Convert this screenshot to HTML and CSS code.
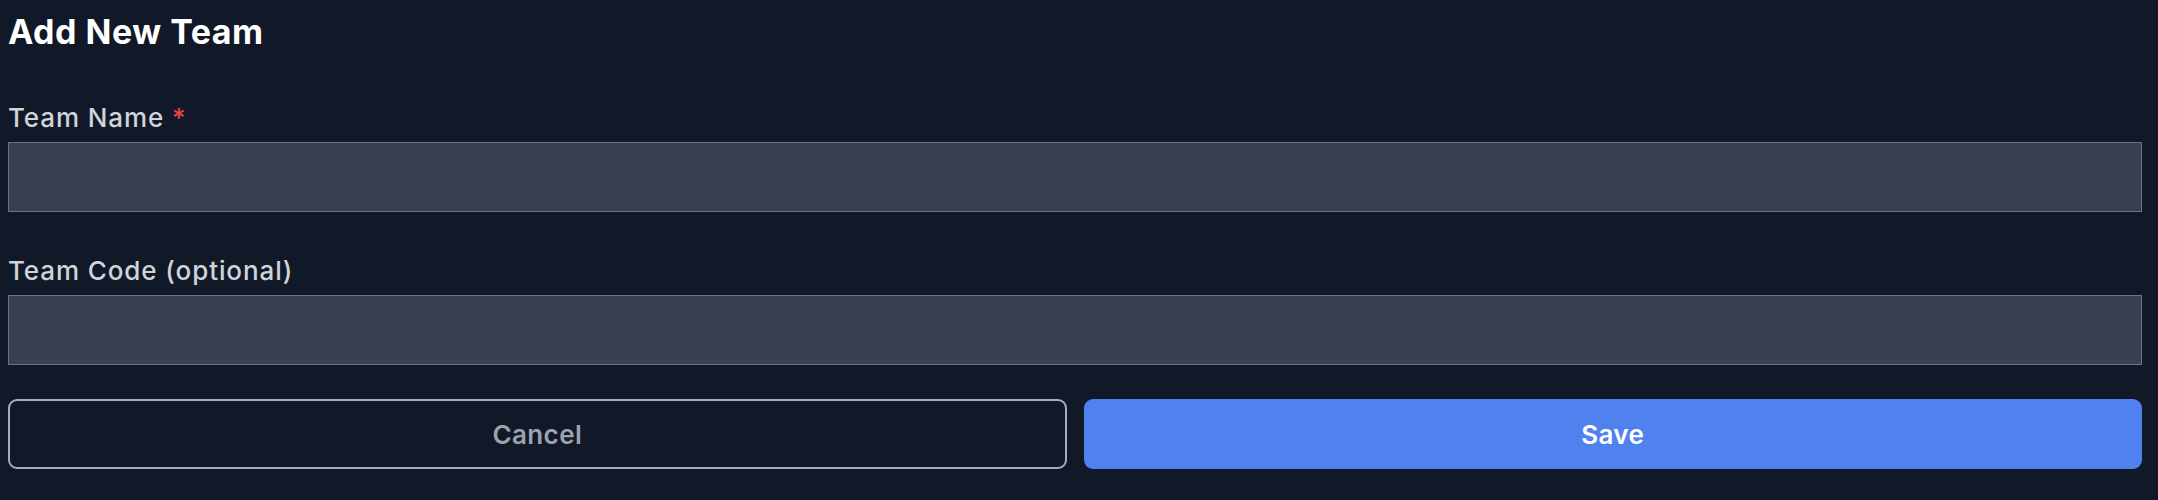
FILE: index.html
```html
<!DOCTYPE html>
<html lang="en">
<head>
<meta charset="utf-8">
<title>Add New Team</title>
<link rel="stylesheet" href="styles.css">
</head>
<body>
<form class="team-form">
  <h1 class="title">Add New Team</h1>
  <div class="fields">
    <div class="field">
      <label class="label" for="team-name">Team Name <span class="req">*</span></label>
      <input class="input" id="team-name" type="text">
    </div>
    <div class="field">
      <label class="label" for="team-code">Team Code (optional)</label>
      <input class="input" id="team-code" type="text">
    </div>
  </div>
  <div class="actions">
    <button type="button" class="btn btn-cancel">Cancel</button>
    <button type="button" class="btn btn-save">Save</button>
  </div>
</form>
</body>
</html>
```
FILE: styles.css
```css
html, body {
  margin: 0;
  padding: 0;
  background: #111827;
}
body {
  font-family: Inter, "Noto Sans", "Liberation Sans", sans-serif;
}
.team-form {
  padding: 12px 16px 0 8px;
  display: flex;
  flex-direction: column;
}
.title {
  margin: 0;
  font-size: 34px;
  line-height: 40px;
  font-weight: 700;
  color: #ffffff;
  letter-spacing: 0.5px;
}
.fields {
  margin-top: 48px;
  display: flex;
  flex-direction: column;
  gap: 41px;
}
.field {
  display: flex;
  flex-direction: column;
  gap: 6px;
}
.label {
  font-size: 26px;
  line-height: 36px;
  font-weight: 500;
  color: #cfd3da;
  letter-spacing: 0.9px;
}
.req {
  color: #ef4444;
}
.input {
  box-sizing: border-box;
  height: 70px;
  width: 100%;
  margin: 0;
  background: #394151;
  border: 1.5px solid #6b7280;
  border-radius: 0;
  outline: none;
  color: #fff;
  font: inherit;
}
.actions {
  margin-top: 34px;
  display: grid;
  grid-template-columns: 1fr 1fr;
  gap: 17px;
}
.btn {
  box-sizing: border-box;
  height: 70px;
  border-radius: 9px;
  font-family: inherit;
  font-size: 26px;
  font-weight: 600;
  letter-spacing: 0.4px;
  cursor: pointer;
}
.btn-cancel {
  background: transparent;
  border: 2px solid #a7adb8;
  color: #9ca3af;
}
.btn-save {
  background: #4f82ee;
  border: none;
  color: #ffffff;
}
```
